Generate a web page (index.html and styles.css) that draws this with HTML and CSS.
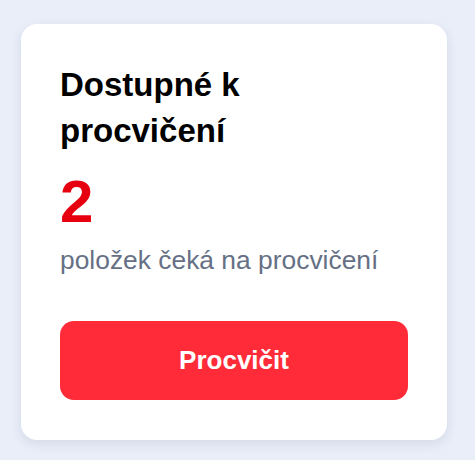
FILE: index.html
```html
<!DOCTYPE html>
<html lang="cs">
  <head>
    <meta charset="UTF-8" />
    <meta name="viewport" content="width=device-width, initial-scale=1.0" />
    <title>Procvičování</title>
    <link rel="stylesheet" href="styles.css">
  </head>
  <body>
    <div class="card">
      <h2 class="card-title">Dostupné k procvičení</h2>
      <p class="due-count">2</p>
      <p class="due-label">položek čeká na procvičení</p>
      <button class="practice-button">Procvičit</button>
    </div>
  </body>
</html>
```

FILE: styles.css
```css
body {
  margin: 0;
  padding: 24px 28px 20px 21px;
  background-color: #e9eef9;
  font-family: "Liberation Sans", Arial, Helvetica, sans-serif;
}

.card {
  background-color: white;
  border-radius: 16px;
  padding: 38px 39px 40px 39px;
  box-shadow: 0 4px 12px rgba(30, 40, 80, 0.1);
}

.card-title {
  margin: 0;
  font-size: 33px;
  font-weight: bold;
  line-height: 46px;
  color: #000;
  max-width: 330px;
}

.due-count {
  margin: 18px 0 0 0;
  font-size: 60px;
  font-weight: bold;
  line-height: 60px;
  color: #e6000f;
}

.due-label {
  margin: 9px 0 0 0;
  font-size: 26.4px;
  line-height: 39px;
  color: #667085;
}

.practice-button {
  display: block;
  width: 100%;
  height: 79px;
  margin-top: 41px;
  border: none;
  border-radius: 14px;
  background-color: #ff2b39;
  color: white;
  font-family: "Liberation Sans", Arial, Helvetica, sans-serif;
  font-size: 26px;
  font-weight: bold;
  cursor: pointer;
}
```
